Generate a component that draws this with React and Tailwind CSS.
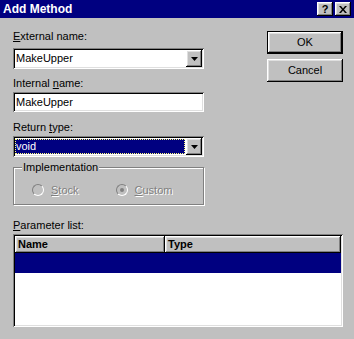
import { useState } from 'react'

const raised =
  'shadow-[inset_-1px_-1px_0_#000,inset_1px_1px_0_#fff,inset_-2px_-2px_0_#808080,inset_2px_2px_0_#dfdfdf]'
const sunken =
  'shadow-[inset_1px_1px_0_#808080,inset_-1px_-1px_0_#fff,inset_2px_2px_0_#000,inset_-2px_-2px_0_#dfdfdf]'

function DownArrow() {
  return (
    <svg width="7" height="4" viewBox="0 0 7 4">
      <polygon points="0,0 7,0 3.5,4" fill="#000" />
    </svg>
  )
}

function DropButton() {
  return (
    <div className={`w-[16px] h-[17px] bg-[#c0c0c0] flex items-center justify-center ${raised}`}>
      <DownArrow />
    </div>
  )
}

function Label({ children }) {
  return <div className="h-[13px] leading-[13px] text-[11px] text-black">{children}</div>
}

function Radio({ checked, children }) {
  return (
    <div className="flex items-center gap-[7px]">
      <div className="w-[12px] h-[12px] rounded-full border border-t-[#808080] border-l-[#808080] border-b-white border-r-white bg-[#c0c0c0] flex items-center justify-center">
        {checked && <div className="w-[4px] h-[4px] rounded-full bg-[#808080]" />}
      </div>
      <span className="text-[11px] leading-[13px] text-[#808080] [text-shadow:1px_1px_0_#fff]">
        {children}
      </span>
    </div>
  )
}

export default function App() {
  const [selected] = useState(0)

  return (
    <div className="w-[354px] h-[339px] bg-[#c0c0c0] font-['Liberation_Sans',Arial,sans-serif] overflow-hidden select-none">
      {/* title bar */}
      <div className="h-[18px] bg-[#000080] flex items-center pl-[3px] pr-[3px]">
        <span className="text-white text-[12px] font-bold leading-none">Add Method</span>
        <div className="ml-auto flex gap-[2px]">
          <div className={`w-[16px] h-[14px] bg-[#c0c0c0] flex items-center justify-center ${raised}`}>
            <span className="text-[11px] font-bold leading-none text-black">?</span>
          </div>
          <div className={`w-[16px] h-[14px] bg-[#c0c0c0] flex items-center justify-center ${raised}`}>
            <svg width="8" height="7" viewBox="0 0 8 7">
              <path d="M0 0h2l2 2.5L6 0h2L5 3.5 8 7H6L4 4.5 2 7H0l3-3.5z" fill="#000" />
            </svg>
          </div>
        </div>
      </div>

      <div className="pl-[13px] pr-[11px] pt-[12px]">
        <div className="flex">
          {/* left column */}
          <div className="w-[191px]">
            <Label>
              <span className="underline">E</span>xternal name:
            </Label>
            <div className={`mt-[5px] h-[21px] bg-white flex items-center pl-[3px] pr-[2px] ${sunken}`}>
              <span className="flex-1 text-[11px] leading-none">MakeUpper</span>
              <DropButton />
            </div>

            <div className="mt-[8px]">
              <Label>
                Internal <span className="underline">n</span>ame:
              </Label>
            </div>
            <div className={`mt-[2px] h-[20px] bg-white flex items-center pl-[3px] ${sunken}`}>
              <span className="text-[11px] leading-none">MakeUpper</span>
            </div>

            <div className="mt-[9px]">
              <Label>
                Return <span className="underline">t</span>ype:
              </Label>
            </div>
            <div className={`mt-[2px] h-[21px] bg-white flex items-center pl-[2px] pr-[2px] gap-[1px] ${sunken}`}>
              <div className="flex-1 h-[15px] bg-[#000080] outline-1 outline-dotted outline-[#ffff80] -outline-offset-1 flex items-center pl-[1px]">
                <span className="text-white text-[11px] leading-none">void</span>
              </div>
              <DropButton />
            </div>

            <div className="relative mt-[10px] h-[38px] border border-[#808080] shadow-[inset_1px_1px_0_#fff,1px_1px_0_#fff] flex items-center pl-[18px] gap-[37px] pt-[8px]">
              <span className="absolute -top-[7px] left-[8px] px-[1px] bg-[#c0c0c0] text-[11px] leading-[13px]">
                Implementation
              </span>
              <Radio>
                <span className="underline">S</span>tock
              </Radio>
              <Radio checked>
                <span className="underline">C</span>ustom
              </Radio>
            </div>
          </div>

          {/* right column */}
          <div className="ml-auto flex flex-col gap-[5px] pt-[1px]">
            <div className="w-[76px] h-[23px] border border-black">
              <div className={`w-full h-full bg-[#c0c0c0] flex items-center justify-center text-[11px] ${raised}`}>
                OK
              </div>
            </div>
            <div className={`w-[76px] h-[23px] bg-[#c0c0c0] flex items-center justify-center text-[11px] ${raised}`}>
              Cancel
            </div>
          </div>
        </div>

        <div className="mt-[14px]">
          <Label>
            <span className="underline">P</span>arameter list:
          </Label>
        </div>
        <div className={`mt-[2px] h-[93px] bg-white p-[2px] ${sunken}`}>
          <div className="flex h-[17px]">
            <div className={`w-[150px] bg-[#c0c0c0] flex items-center pl-[3px] ${raised}`}>
              <span className="text-[11px] font-bold leading-none">Name</span>
            </div>
            <div className={`flex-1 bg-[#c0c0c0] flex items-center pl-[3px] ${raised}`}>
              <span className="text-[11px] font-bold leading-none">Type</span>
            </div>
          </div>
          {[0].map((i) => (
            <div key={i} className={`h-[20px] ${selected === i ? 'bg-[#000080]' : ''}`} />
          ))}
        </div>
      </div>
    </div>
  )
}
